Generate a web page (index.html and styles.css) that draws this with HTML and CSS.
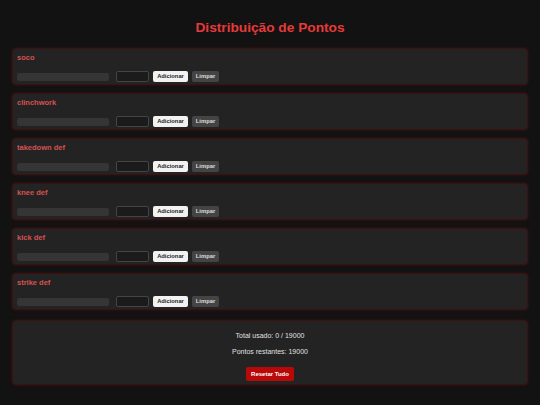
FILE: index.html
```html
<!DOCTYPE html>
<html lang="pt">
<head>
<meta charset="utf-8">
<link rel="stylesheet" href="styles.css">
</head>
<body>
<div class="page">
  <h1 class="title">Distribuição de Pontos</h1>
  <div class="card">
    <div class="label">soco</div>
    <div class="row"><div class="bar"></div><input class="num" type="text"><button class="btn add">Adicionar</button><button class="btn clear">Limpar</button></div>
  </div>
  <div class="card">
    <div class="label">clinchwork</div>
    <div class="row"><div class="bar"></div><input class="num" type="text"><button class="btn add">Adicionar</button><button class="btn clear">Limpar</button></div>
  </div>
  <div class="card">
    <div class="label">takedown def</div>
    <div class="row"><div class="bar"></div><input class="num" type="text"><button class="btn add">Adicionar</button><button class="btn clear">Limpar</button></div>
  </div>
  <div class="card">
    <div class="label">knee def</div>
    <div class="row"><div class="bar"></div><input class="num" type="text"><button class="btn add">Adicionar</button><button class="btn clear">Limpar</button></div>
  </div>
  <div class="card">
    <div class="label">kick def</div>
    <div class="row"><div class="bar"></div><input class="num" type="text"><button class="btn add">Adicionar</button><button class="btn clear">Limpar</button></div>
  </div>
  <div class="card">
    <div class="label">strike def</div>
    <div class="row"><div class="bar"></div><input class="num" type="text"><button class="btn add">Adicionar</button><button class="btn clear">Limpar</button></div>
  </div>
  <div class="card summary">
    <div class="line">Total usado: 0 / 19000</div>
    <div class="line">Pontos restantes: 19000</div>
    <button class="btn reset">Resetar Tudo</button>
  </div>
</div>
</body>
</html>
```
FILE: styles.css
```css
html, body {
  margin: 0;
  padding: 0;
  background: #121212;
  font-family: "Liberation Sans", Arial, sans-serif;
}
.page {
  padding: 17px 12px 20px;
  display: flex;
  flex-direction: column;
  gap: 8px;
}
.title {
  margin: 0 0 1px;
  text-align: center;
  font-size: 13.7px;
  font-weight: bold;
  color: #e63a3a;
  line-height: 22px;
}
.card {
  background: #232323;
  border: 1px solid #3a1212;
  border-radius: 4px;
  box-shadow: 0 0 3px rgba(160, 20, 20, 0.35);
  padding: 4px 4px 3px;
  height: 37px;
  box-sizing: border-box;
}
.label {
  font-size: 7.5px;
  font-weight: bold;
  color: #d65252;
  line-height: 10px;
}
.row {
  margin-top: 8px;
  display: flex;
  align-items: center;
  height: 11px;
}
.bar {
  width: 92px;
  height: 8px;
  background: #353535;
  border-radius: 2px;
}
.num {
  margin: 0 0 0 7px;
  width: 33px;
  height: 11px;
  box-sizing: border-box;
  background: #1b1b1b;
  border: 1px solid #444;
  border-radius: 2px;
  padding: 0;
}
.btn {
  font-family: "Liberation Sans", Arial, sans-serif;
  font-size: 5.8px;
  font-weight: bold;
  border: none;
  border-radius: 2px;
  padding: 0;
  height: 11px;
  line-height: 11px;
}
.add {
  margin-left: 4px;
  width: 35px;
  background: #f2f2f2;
  color: #222;
}
.clear {
  margin-left: 4px;
  width: 27px;
  background: #444;
  color: #ddd;
}
.summary {
  height: 65px;
  margin-top: 2px;
  display: flex;
  flex-direction: column;
  align-items: center;
  padding-top: 10px;
}
.line {
  font-size: 7px;
  color: #e0e0e0;
  line-height: 10px;
  margin-bottom: 6px;
}
.reset {
  margin-top: 4px;
  width: 48px;
  height: 14px;
  line-height: 14px;
  background: #b80808;
  color: #fff;
  font-size: 6px;
  border-radius: 2px;
}
```
